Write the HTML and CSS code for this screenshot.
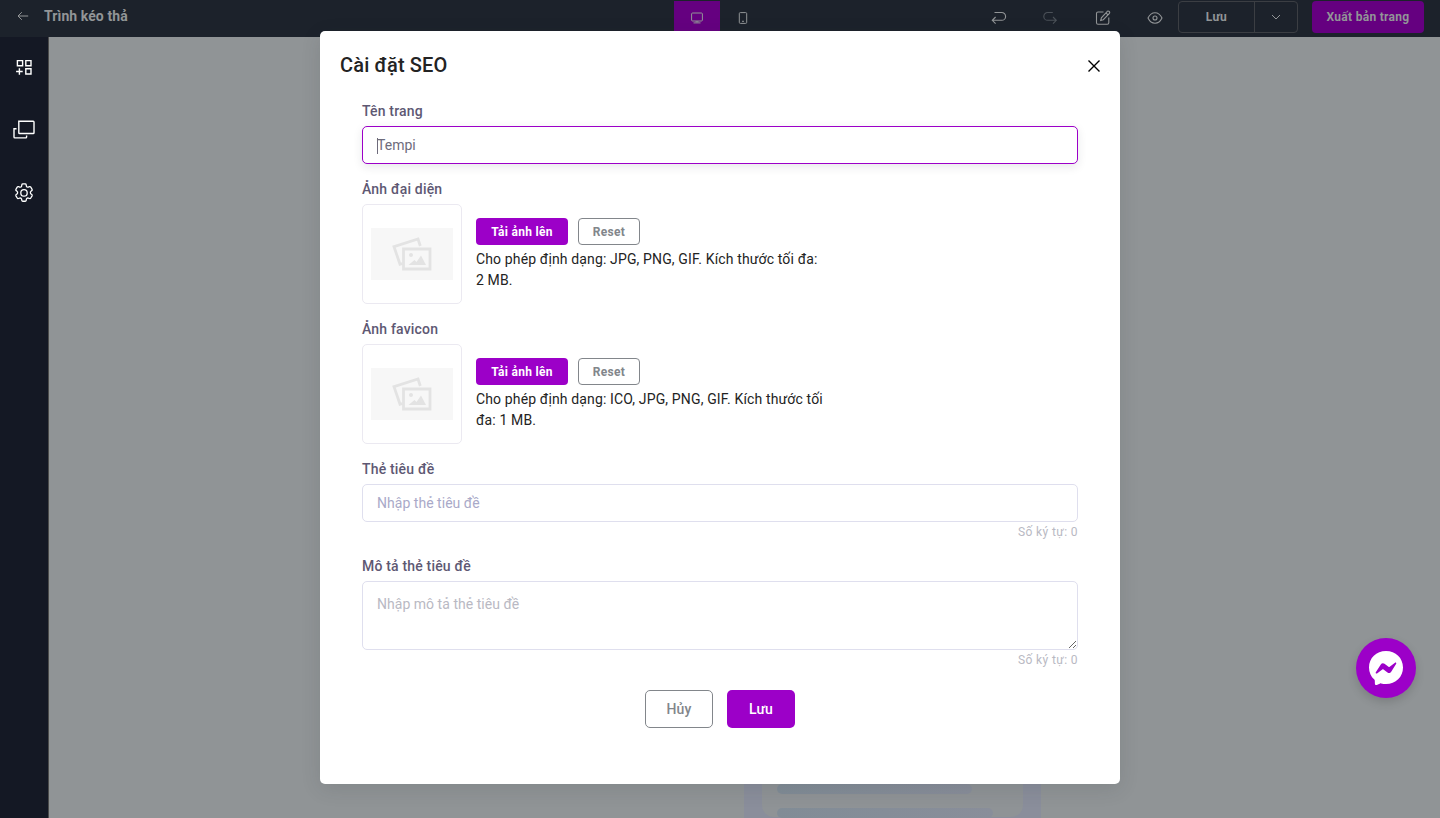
FILE: index.html
```html
<!DOCTYPE html>
<html lang="vi">
<head>
<meta charset="utf-8">
<title>Cài đặt SEO</title>
<link rel="stylesheet" href="styles.css">
</head>
<body>
<div class="app">
  <header class="topbar">
    <div class="topbar-left">
      <svg class="back" width="12" height="10" viewBox="0 0 12 10"><path d="M11.2 5H1.2M4.8 1.2L1 5l3.8 3.8"/></svg>
      <span class="page-title">Trình kéo thả</span>
    </div>
    <div class="devices">
      <button class="device active"><svg width="12" height="12" viewBox="0 0 12 12"><rect x=".6" y="1" width="10.8" height="8" rx="1"/><path d="M2.5 10.9h7M4.5 9.8h3"/></svg></button>
      <button class="device"><svg width="12" height="12" viewBox="0 0 12 12"><rect x="2.3" y=".6" width="7.4" height="10.8" rx="1"/><path d="M5 9.3h2"/></svg></button>
    </div>
    <div class="topbar-right">
      <div class="tools">
        <svg width="16" height="16" viewBox="0 0 16 16"><path d="M3.500 2.500h7.200a3.800 3.800 0 0 1 0 7.800H1.400M4.600 7L1.300 10.300l3.300 3.300"/></svg>
        <svg class="muted" width="16" height="16" viewBox="0 0 16 16"><path d="M9.800 2.500H4.700a3.800 3.800 0 0 0 0 7.800h8.500M10 7l3.300 3.300L10 13.600"/></svg>
        <svg width="16" height="16" viewBox="0 0 16 16"><path d="M8.500 2H3Q1.500 2 1.500 3.500v9.300q0 1.500 1.500 1.500h9.300q1.500 0 1.500-1.500V7.500M12.300 1.300q1-.7 1.900.2t.2 1.900L8.300 9.700l-2.600.7.700-2.600zM11 2.800l2 2"/></svg>
        <svg width="16" height="16" viewBox="0 0 16 16"><path d="M1 8Q3.500 2.700 8 2.700T15 8Q12.500 13.200 8 13.200T1 8z"/><circle cx="8" cy="8" r="2"/></svg>
      </div>
      <div class="save-group"><button class="save-main">Lưu</button><button class="save-more"><svg width="10" height="6" viewBox="0 0 10 6"><path d="M1 1l4 4 4-4"/></svg></button></div>
      <button class="publish">Xuất bản trang</button>
    </div>
  </header>
  <div class="workspace">
    <nav class="sidebar">
      <svg width="22" height="22" viewBox="0 0 22 22"><path d="M4.400 4.600h5.200v5.200H4.400zM12.800 4.600H18v5.200h-5.200zM12.800 12.800H18V18h-5.200zM6.400 12.200v6.600M3.100 15.500h6.600"/></svg>
      <svg width="22" height="20" viewBox="0 0 22 20"><path d="M6 1.300h14.200q.8 0 .8.800v10.600q0 .8-.8.800H6.600q-.8 0-.8-.8V1.300zM3.500 8.800H1v8.300q0 .8.800.8h11q.8 0 .8-.8v-1.500"/></svg>
      <svg width="22" height="22" viewBox="0 0 24 24"><path d="M9.600 3.100c.1-.6.500-1 1.100-1h2.600c.6 0 1 .4 1.100 1l.2 1.300c.1.400.3.700.6.900l.4.200c.3.200.7.200 1.100.1l1.300-.5c.5-.2 1.100 0 1.400.5l1.400 2.400c.3.500.2 1.100-.3 1.400l-1.100.9c-.3.200-.4.600-.4 1v.5c0 .4.100.7.400 1l1.100.9c.4.400.5 1 .3 1.400l-1.400 2.400c-.3.500-.9.700-1.400.5l-1.300-.5c-.4-.1-.7-.1-1.100.1l-.4.300c-.3.100-.5.400-.6.800l-.2 1.300c-.1.600-.5 1-1.100 1h-2.600c-.6 0-1-.4-1.100-1l-.2-1.300c-.1-.4-.3-.7-.6-.8l-.4-.3c-.4-.2-.7-.2-1.100-.1l-1.300.5c-.5.200-1.100 0-1.400-.5l-1.400-2.400c-.2-.4-.1-1 .3-1.400l1.100-.9c.3-.3.400-.6.400-1v-.5c0-.4-.1-.8-.4-1l-1.100-.9c-.5-.3-.6-.9-.3-1.400l1.400-2.400c.3-.5.900-.7 1.400-.5l1.300.5c.4.100.8.100 1.100-.1l.4-.2c.3-.2.500-.5.600-.9z"/><circle cx="12" cy="11.900" r="3.500"/></svg>
    </nav>
    <main class="canvas">
      <div class="preview"><div class="preview-card"><i class="line"></i><i class="line long"></i></div></div>
    </main>
  </div>
</div>

<div class="modal">
  <div class="modal-head"><h1>Cài đặt SEO</h1><svg width="12" height="12" viewBox="0 0 12 12"><path d="M.5.500l11 11M11.500.500l-11 11"/></svg></div>
  <form class="form">
    <label>Tên trang</label>
    <div class="input focused"><i class="caret"></i>Tempi</div>
    <label class="gap">Ảnh đại diện</label>
    <div class="upload">
      <div class="thumb"><div class="placeholder"><svg width="40" height="34" viewBox="0 0 40 34"><path d="M10.500 26.500L8 27.300 2 9.700 26 2l2.300 7"/><path d="M11.500 12h26.500v20h-26.500z"/><circle class="solid" cx="19" cy="18" r="2"/><path class="solid" d="M16.500 28l6-5 2 2 4.500-6.500L34 28z"/></svg></div></div>
      <div class="upload-info">
        <div class="upload-buttons"><button type="button" class="small primary">Tải ảnh lên</button><button type="button" class="small outline">Reset</button></div>
        <p>Cho phép định dạng: JPG, PNG, GIF. Kích thước tối đa: 2 MB.</p>
      </div>
    </div>
    <label class="gap">Ảnh favicon</label>
    <div class="upload">
      <div class="thumb"><div class="placeholder"><svg width="40" height="34" viewBox="0 0 40 34"><path d="M10.500 26.500L8 27.300 2 9.700 26 2l2.300 7"/><path d="M11.500 12h26.500v20h-26.500z"/><circle class="solid" cx="19" cy="18" r="2"/><path class="solid" d="M16.500 28l6-5 2 2 4.500-6.500L34 28z"/></svg></div></div>
      <div class="upload-info">
        <div class="upload-buttons"><button type="button" class="small primary">Tải ảnh lên</button><button type="button" class="small outline">Reset</button></div>
        <p>Cho phép định dạng: ICO, JPG, PNG, GIF. Kích thước tối đa: 1 MB.</p>
      </div>
    </div>
    <label class="gap">Thẻ tiêu đề</label>
    <input class="input" placeholder="Nhập thẻ tiêu đề">
    <div class="count">Số ký tự: 0</div>
    <label class="gap-small">Mô tả thẻ tiêu đề</label>
    <textarea class="input area" placeholder="Nhập mô tả thẻ tiêu đề"></textarea>
    <div class="count">Số ký tự: 0</div>
    <div class="actions"><button type="button" class="big outline">Hủy</button><button type="button" class="big primary">Lưu</button></div>
  </form>
</div>

<div class="chat"><svg width="36" height="36" viewBox="0 0 36 36"><path fill="#fff" d="M18 1C8.300 1 1 8 1 17.500c0 5 2 9.200 5.300 12.100.3.300.5.700.5 1.100l.1 3c0 1 1 1.600 1.900 1.200l3.400-1.500c.3-.1.600-.1.900 0 1.500.4 3.200.6 4.900.6 9.700 0 17-7 17-16.500S27.700 1 18 1z"/><path class="bolt" d="M7.800 22.300l5-7.900c.8-1.300 2.500-1.600 3.700-.7l4 3c.4.300.8.300 1.200 0l5.300-4c.7-.6 1.700.3 1.200 1.100l-5 7.900c-.8 1.300-2.500 1.600-3.700.7l-4-3c-.4-.3-.8-.3-1.200 0L9 23.400c-.7.600-1.700-.3-1.200-1.100z"/></svg></div>
</body>
</html>
```
FILE: styles.css
```css
* { box-sizing: border-box; }
body { margin: 0; width: 1440px; height: 818px; overflow: hidden; font: 14px/21px Roboto, sans-serif; letter-spacing: .14px; color: #232323; }
button { font: inherit; letter-spacing: inherit; padding: 0; border: 0; background: none; color: inherit; }
svg { fill: none; stroke: currentColor; flex: none; display: block; }

.app { height: 818px; display: flex; flex-direction: column; background: #909496; }
.topbar { height: 37px; background: #1c222b; color: #929597; display: grid; grid-template-columns: 1fr auto 1fr; align-items: start; }
.topbar-left { display: flex; align-items: center; gap: 15px; height: 32px; padding-left: 17px; }
.page-title { font-weight: 700; letter-spacing: .08px; }
.devices { display: flex; padding-top: 1px; }
.device { width: 46px; height: 36px; display: grid; place-items: center; padding-bottom: 2px; }
.device.active { background: #650080; }
.topbar-right { display: flex; justify-content: flex-end; padding: 1px 16px 0 0; }
.tools { display: flex; gap: 36px; padding: 9px 15px 0 0; }
.tools svg { stroke-width: 1.1; }
.tools .muted { color: #4b5158; }
.save-group { display: flex; width: 120px; height: 32px; border: 1px solid #3b3e43; border-radius: 4px; font-size: 12px; font-weight: 700; letter-spacing: .3px; }
.save-main { width: 76px; border-right: 1px solid #3b3e43; }
.save-more { flex: 1; display: grid; place-items: center; }
.publish { width: 112px; height: 32px; margin-left: 14px; background: #650080; border-radius: 4px; font-size: 12px; font-weight: 700; letter-spacing: .3px; }

.workspace { flex: 1; display: flex; min-height: 0; }
.sidebar { width: 49px; background: #141824; color: #fff; border-right: 1px solid #4b4b4b; display: flex; flex-direction: column; align-items: center; gap: 42px; padding-top: 19px; }
.sidebar svg { stroke-width: 1.4; }
.canvas { flex: 1; display: flex; flex-direction: column; align-items: flex-start; justify-content: flex-end; overflow: hidden; padding-left: 695px; }
.preview { width: 297px; height: 60px; background: #8a8e9b; padding: 0 18px; }
.preview-card { height: 59px; background: #8f9396; border-radius: 0 0 12px 12px; padding: 26px 15px 0; display: flex; flex-direction: column; gap: 14px; }
.line { flex: none; width: 195px; height: 10px; border-radius: 5px; background: linear-gradient(90deg, #818c96, #898e9a); }
.line.long { width: 216px; }

.modal { position: absolute; left: 320px; top: 31px; width: 800px; height: 753px; background: #fff; border-radius: 5px; box-shadow: 0 5px 20px rgba(34, 41, 47, .12); }
.modal-head { display: flex; justify-content: space-between; align-items: flex-start; padding: 20px 20px 0; height: 50px; }
.modal-head svg { color: #000; stroke-width: 1.4; margin-top: 9px; }
h1 { margin: 0; font-size: 20px; line-height: 28px; font-weight: 500; letter-spacing: .15px; }
.form { padding: 20px 42px 0; }
label { display: block; height: 25px; line-height: 21px; font-weight: 500; color: #5e5873; letter-spacing: .18px; }
.gap { margin-top: 15px; }
.gap-small { margin-top: 14px; }
.input { display: block; width: 100%; height: 38px; border: 1px solid #dfdfee; border-radius: 5px; padding: 0 14px; font: 14px/36px Roboto, sans-serif; letter-spacing: .03px; color: #6e6b7b; outline: 0; background: #fff; }
.input::placeholder { color: #a9a9c8; }
.focused { position: relative; border-color: #9c00c8; box-shadow: 0 3px 10px rgba(34, 41, 47, .1); }
.caret { position: absolute; left: 14px; top: 11px; width: 1px; height: 16px; background: #6e6b7b; }
.area { height: 69px; padding: 12px 14px; line-height: 21px; }
.area::placeholder { color: #b9b9c3; }
.upload { display: flex; gap: 14px; height: 100px; }
.thumb { width: 100px; border: 1px solid #ebe9f1; border-radius: 5px; display: grid; place-items: center; flex: none; }
.placeholder { width: 82px; height: 52px; background: #f7f7f7; color: #e3e3e3; display: grid; place-items: center; }
.placeholder svg { stroke-width: 2.8; }
.solid { fill: currentColor; stroke: none; }
.upload-info { width: 350px; padding-top: 14px; }
.upload-buttons { display: flex; gap: 10px; height: 27px; }
.small { border-radius: 4px; font-size: 12px; font-weight: 700; letter-spacing: .3px; padding-top: 1px; }
.small.primary { width: 92px; }
.small.outline { width: 62px; }
.primary { background: #9c00c8; color: #fff; }
.outline { border: 1px solid #82868b; color: #82868b; }
.upload-info p { margin: 4px 0 0; letter-spacing: .14px; }
.count { height: 20px; line-height: 20px; text-align: right; font-size: 12px; color: #b9b9c3; letter-spacing: .4px; }
.actions { display: flex; justify-content: center; gap: 14px; margin-top: 20px; }
.big { width: 68px; height: 38px; border-radius: 5px; font-weight: 500; }

.chat { position: absolute; left: 1356px; top: 638px; width: 60px; height: 60px; border-radius: 50%; background: #9c00c8; display: grid; place-items: center; box-shadow: 0 4px 10px rgba(0, 0, 0, .15); }
.chat svg { stroke: none; }
.bolt { fill: #9c00c8; }
```
